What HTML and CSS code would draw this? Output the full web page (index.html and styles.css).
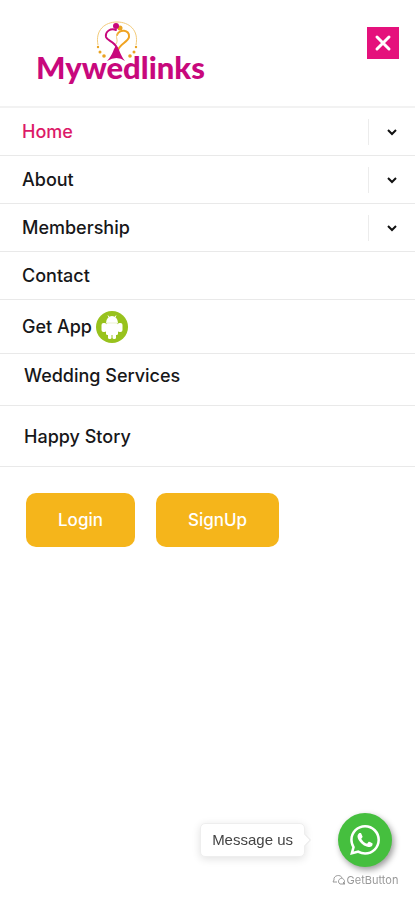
FILE: index.html
```html
<!DOCTYPE html>
<html lang="en">
<head>
    <meta charset="UTF-8">
    <meta name="viewport" content="width=device-width, initial-scale=1.0">
    <title>Mywedlinks</title>
    <link rel="stylesheet" href="styles.css">
</head>
<body>
    <header class="header">
        <a class="logo" href="#">
            <svg width="184" height="72" viewBox="0 0 184 72" role="img" aria-label="Mywedlinks">
                <path d="M66 27 C63 12 73 4 85 4 C97 4 107 12 104 27" fill="none" stroke="#f3cb7a"/>
                <g fill="#e9a322">
                    <circle cx="66" cy="29" r="1.2"/>
                    <circle cx="68" cy="34" r="1.5"/>
                    <circle cx="72" cy="38" r="1.8"/>
                    <circle cx="104" cy="29" r="1.2"/>
                    <circle cx="102" cy="34" r="1.5"/>
                    <circle cx="98" cy="38" r="1.8"/>
                    <circle cx="88" cy="10" r="2.5"/>
                </g>
                <g fill="none" stroke-width="2" stroke-linecap="round">
                    <path stroke="#f0a321" d="M85 17 C87 11 98 11 97 19 C96 24 88 26 86 32"/>
                    <path stroke="#f3cb7a" stroke-width="1" d="M85 16 C83 20 87 22 84 26"/>
                    <path stroke="#c8087c" d="M84 12 C79 10 73 13 74 19 C75 23 82 23 85 30"/>
                </g>
                <circle cx="84" cy="8" r="3" fill="#c8087c"/>
                <path fill="#c8087c" d="M84 28 C87 29 88 37 93 43 Q85 37 75 43 C81 37 82 29 84 28Z"/>
                <text class="logo-text" x="4" y="61">Mywedlinks</text>
            </svg>
        </a>
        <button class="close" type="button" aria-label="Close menu">
            <svg width="18" height="18" viewBox="0 0 18 18"><path d="M3 3 L15 15 M15 3 L3 15"/></svg>
        </button>
    </header>

    <nav>
        <ul class="menu">
            <li class="active">
                <a href="#">Home</a>
                <button class="toggle" type="button" aria-label="Open Home submenu">
                    <svg width="12" height="8" viewBox="0 0 12 8"><path d="M2 2 L6 6 L10 2"/></svg>
                </button>
            </li>
            <li>
                <a href="#">About</a>
                <button class="toggle" type="button" aria-label="Open About submenu">
                    <svg width="12" height="8" viewBox="0 0 12 8"><path d="M2 2 L6 6 L10 2"/></svg>
                </button>
            </li>
            <li>
                <a href="#">Membership</a>
                <button class="toggle" type="button" aria-label="Open Membership submenu">
                    <svg width="12" height="8" viewBox="0 0 12 8"><path d="M2 2 L6 6 L10 2"/></svg>
                </button>
            </li>
            <li><a href="#">Contact</a></li>
            <li class="app">
                <a href="#">Get App
                    <svg width="32" height="32" viewBox="0 0 32 32">
                        <circle cx="16" cy="16" r="16" fill="#98c21d"/>
                        <g fill="#fff">
                            <path d="M10 12 A6 7 0 0 1 22 12Z"/>
                            <rect x="10" y="12" width="12" height="12" rx="1.500"/>
                            <rect x="5.500" y="12" width="5" height="9" rx="2"/>
                            <rect x="21.500" y="12" width="5" height="9" rx="2"/>
                            <rect x="12" y="21" width="3.500" height="7" rx="1.500"/>
                            <rect x="16.500" y="21" width="3.500" height="7" rx="1.500"/>
                        </g>
                        <path d="M12 4.500 L13.500 7 M20 4.500 L18.500 7" stroke="#fff"/>
                        <path d="M10.500 12 H21.500" stroke="#dcebb0" stroke-width="0.600"/>
                    </svg>
                </a>
            </li>
            <li class="services"><a href="#">Wedding Services</a></li>
            <li class="story"><a href="#">Happy Story</a></li>
        </ul>
    </nav>

    <div class="actions">
        <button type="button">Login</button>
        <button type="button">SignUp</button>
    </div>

    <div class="chat">
        <a class="message" href="#">Message us</a>
        <a class="whatsapp" href="#" aria-label="WhatsApp">
            <svg width="30" height="30" viewBox="0 0 24 24" fill="#fff">
                <path d="M17.472 14.382c-.297-.149-1.758-.867-2.030-.967-.273-.099-.471-.148-.670.150-.197.297-.767.966-.940 1.164-.173.199-.347.223-.644.075-.297-.150-1.255-.463-2.390-1.475-.883-.788-1.480-1.761-1.653-2.059-.173-.297-.018-.458.130-.606.134-.133.298-.347.446-.520.149-.174.198-.298.298-.497.099-.198.050-.371-.025-.520-.075-.149-.669-1.612-.916-2.207-.242-.579-.487-.500-.669-.510-.173-.008-.371-.010-.570-.010-.198 0-.520.074-.792.372-.272.297-1.040 1.016-1.040 2.479 0 1.462 1.065 2.875 1.213 3.074.149.198 2.096 3.200 5.077 4.487.709.306 1.262.489 1.694.625.712.227 1.360.195 1.871.118.571-.085 1.758-.719 2.006-1.413.248-.694.248-1.289.173-1.413-.074-.124-.272-.198-.570-.347"/>
                <path d="M12.050 21.785h-.004a9.870 9.870 0 0 1-5.031-1.378l-.361-.214-3.741.982.998-3.648-.235-.374a9.860 9.860 0 0 1-1.510-5.260c.001-5.450 4.436-9.884 9.888-9.884 2.640 0 5.122 1.030 6.988 2.898a9.825 9.825 0 0 1 2.893 6.994c-.003 5.450-4.437 9.884-9.885 9.884m8.413-18.297A11.815 11.815 0 0 0 12.050 0C5.495 0 .160 5.335.157 11.892c0 2.096.547 4.142 1.588 5.945L.057 24l6.305-1.654a11.882 11.882 0 0 0 5.683 1.448h.005c6.554 0 11.890-5.335 11.893-11.893a11.821 11.821 0 0 0-3.480-8.413z"/>
            </svg>
        </a>
        <a class="getbutton" href="#">
            <svg width="14" height="12" viewBox="0 0 14 12"><path d="M5 8 H1 L2 6 C1 1 9 0 10 4 M11 10 A3 3 0 1 0 8 10 H13 L11 8"/></svg>
            GetButton
        </a>
    </div>
</body>
</html>
```
FILE: styles.css
```css
* {
    box-sizing: border-box;
}

body {
    margin: 0;
    background-color: #fff;
    color: #171719;
    font-family: Inter, 'Open Sans', sans-serif;
    font-size: 18px;
    font-weight: 500;
}

a {
    color: inherit;
    text-decoration: none;
}

button {
    border: none;
    padding: 0;
    font: inherit;
    cursor: pointer;
}

svg {
    display: block;
}

.header {
    display: flex;
    justify-content: space-between;
    align-items: flex-start;
    padding: 18px 16px 16px 32px;
    border-bottom: 2px solid #f2f2f2;
}

.logo-text {
    font-family: Lato, sans-serif;
    font-size: 31px;
    font-weight: 900;
    fill: #c8087c;
}

.close {
    display: flex;
    align-items: center;
    justify-content: center;
    width: 32px;
    height: 32px;
    margin-top: 9px;
    background-color: #e5117c;
}

.close svg {
    fill: none;
    stroke: #fff;
    stroke-width: 3px;
    stroke-linecap: round;
}

.menu {
    list-style: none;
    margin: 0;
    padding: 0;
}

.menu li {
    display: flex;
    align-items: center;
    justify-content: space-between;
    min-height: 48px;
    padding-left: 22px;
    border-bottom: 1px solid #e9e9e9;
}

.menu .active a {
    color: #dc1a68;
}

.toggle {
    display: flex;
    align-items: center;
    justify-content: center;
    width: 47px;
    height: 26px;
    border-left: 1px solid #ececec;
    background: none;
}

.toggle svg {
    fill: none;
    stroke: #111;
    stroke-width: 2px;
}

.menu .app {
    min-height: 54px;
}

.app a {
    display: flex;
    align-items: center;
    gap: 4px;
}

.menu .services {
    align-items: flex-start;
    min-height: 52px;
    padding-top: 11px;
    padding-left: 24px;
}

.menu .story {
    min-height: 61px;
    padding-left: 24px;
}

.actions {
    display: flex;
    gap: 21px;
    padding: 26px;
}

.actions button {
    padding: 16px 32px;
    border-radius: 10px;
    background-color: #f5b51b;
    color: #fff;
    font-size: 17px;
    line-height: 22px;
}

/* Chat widget */
.chat {
    position: fixed;
    right: 16px;
    bottom: 12px;
    display: grid;
    grid-template-columns: auto 68px;
    column-gap: 26px;
    row-gap: 5px;
    align-items: center;
    justify-items: center;
}

.message {
    position: relative;
    padding: 6px 11px;
    border: 1px solid #eee;
    border-radius: 5px;
    background-color: #fff;
    box-shadow: 0 2px 8px rgba(0, 0, 0, 0.12);
    color: #444;
    font-family: 'Liberation Sans', Arial, sans-serif;
    font-size: 15px;
    font-weight: 400;
    line-height: 20px;
}

.message::after {
    content: '';
    position: absolute;
    top: 12px;
    right: -4px;
    width: 8px;
    height: 8px;
    background-color: #fff;
    box-shadow: 1px -1px 1px #e9e9e9;
    transform: rotate(45deg);
}

.whatsapp {
    display: flex;
    align-items: center;
    justify-content: center;
    width: 54px;
    height: 54px;
    border-radius: 50%;
    background-color: #45bf3e;
    box-shadow: 2px 3px 6px rgba(0, 0, 0, 0.4);
}

.getbutton {
    grid-column: 2;
    display: flex;
    align-items: center;
    gap: 1px;
    color: #999;
    font-size: 11px;
    font-weight: 400;
    line-height: 16px;
}

.getbutton svg {
    fill: none;
    stroke: #999;
}
```
